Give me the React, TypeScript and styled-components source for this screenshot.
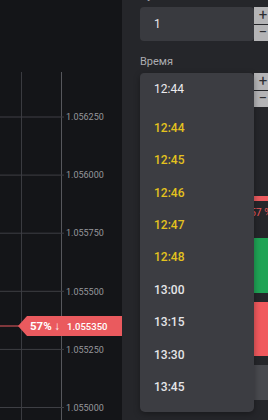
import React from 'react';
import styled, { createGlobalStyle } from 'styled-components';

const GlobalStyle = createGlobalStyle`
  html, body {
    margin: 0;
    padding: 0;
    background: #141518;
    overflow: hidden;
  }
  body {
    font-family: Roboto, "Noto Sans", "Liberation Sans", sans-serif;
  }
`;

const Page = styled.div`
  display: flex;
  width: 268px;
  height: 420px;
  overflow: hidden;
`;

const ChartPane = styled.div`
  position: relative;
  flex: none;
  width: 122px;
  height: 100%;
  background: #141518;
`;

const PriceTag = styled.div`
  position: absolute;
  left: 18px;
  top: 316px;
  width: 104px;
  height: 20px;
  display: flex;
  align-items: center;
  padding-left: 12px;
  box-sizing: border-box;
  background: #ea5a5e;
  color: #fff;
  clip-path: polygon(9px 0, 100% 0, 100% 100%, 9px 100%, 0 50%);
`;

const TagPercent = styled.span`
  font-size: 11.5px;
  font-weight: 700;
  width: 37px;
`;

const TagPrice = styled.span`
  font-size: 9.5px;
  font-weight: 500;
`;

const Sidebar = styled.aside`
  position: relative;
  flex: none;
  width: 160px;
  height: 100%;
  padding-left: 18px;
  box-sizing: border-box;
  background: #25262a;
  display: flex;
  flex-direction: column;
`;

const Field = styled.div<{ $top: number }>`
  display: flex;
  flex-direction: column;
  gap: 4px;
  margin-top: ${p => p.$top}px;
`;

const Label = styled.span`
  font-size: 11px;
  line-height: 14px;
  color: #acadb1;
`;

const InputRow = styled.div`
  display: flex;
  height: 34px;
`;

const InputBox = styled.div`
  width: 114px;
  flex: none;
  display: flex;
  align-items: center;
  padding-left: 14px;
  box-sizing: border-box;
  background: #393a3f;
  border-radius: 4px;
  color: #e9e9ea;
  font-size: 12px;
`;

const Stepper = styled.div`
  display: flex;
  flex-direction: column;
  gap: 1px;
  width: 18px;
`;

const StepButton = styled.div`
  flex: 1;
  display: flex;
  align-items: center;
  justify-content: center;
  background: #b4b4b6;
  color: #2c2d31;
  font-size: 15px;
  line-height: 1;
`;

const Sentiment = styled.div`
  display: flex;
  flex-direction: column;
  gap: 6px;
  width: 140px;
  margin-top: 89px;
`;

const SentimentBar = styled.div`
  display: flex;
  height: 5px;
`;

const BarPart = styled.div<{ $color: string }>`
  background: ${p => p.$color};
`;

const SentimentText = styled.div`
  display: flex;
  justify-content: space-between;
  padding-right: 8px;
  font-size: 10.5px;
  line-height: 12px;
`;

const Share = styled.span<{ $color: string }>`
  color: ${p => p.$color};
`;

const Actions = styled.div`
  display: flex;
  flex-direction: column;
  gap: 9px;
  width: 140px;
  margin-top: 19px;
`;

const ActionButton = styled.div<{ $color: string; $height: number }>`
  height: ${p => p.$height}px;
  background: ${p => p.$color};
`;

const Dropdown = styled.div`
  position: absolute;
  left: 18px;
  top: 73px;
  width: 114px;
  height: 339px;
  background: #3c3d42;
  border-radius: 5px;
  box-shadow: 0 2px 6px rgba(0, 0, 0, 0.35);
  display: flex;
  flex-direction: column;
`;

const DropdownHead = styled.div`
  height: 32px;
  display: flex;
  align-items: center;
  padding-left: 14px;
  color: #ececee;
  font-size: 12px;
`;

const OptionList = styled.ul`
  list-style: none;
  margin: 0;
  padding: 6.7px 0 0;
`;

const Option = styled.li<{ $soon?: boolean }>`
  height: 32.4px;
  display: flex;
  align-items: center;
  padding-left: 14px;
  font-size: 12px;
  font-weight: 500;
  color: ${p => (p.$soon ? '#e4c21e' : '#e6e6e8')};
`;

const gridLines = [
  { y: 117, label: '1.056250' },
  { y: 175.1, label: '1.056000' },
  { y: 233.2, label: '1.055750' },
  { y: 291.3, label: '1.055500' },
  { y: 349.4, label: '1.055250' },
  { y: 407.5, label: '1.055000' },
];

const options = [
  { time: '12:44', soon: true },
  { time: '12:45', soon: true },
  { time: '12:46', soon: true },
  { time: '12:47', soon: true },
  { time: '12:48', soon: true },
  { time: '13:00' },
  { time: '13:15' },
  { time: '13:30' },
  { time: '13:45' },
];

const Chart = () => (
  <ChartPane>
    <svg width="122" height="420" viewBox="0 0 122 420">
      <line x1="21.5" y1="72" x2="21.5" y2="420" stroke="#3a3b40" strokeWidth="1" />
      <line x1="61.5" y1="72" x2="61.5" y2="420" stroke="#56575c" strokeWidth="1" />
      {gridLines.map(g => (
        <g key={g.label}>
          <line x1="0" y1={g.y} x2="64" y2={g.y} stroke="#3e3f44" strokeWidth="1" />
          <text
            x="66"
            y={g.y + 3.2}
            fill="#96979b"
            fontSize="9"
            fontFamily="Roboto, 'Noto Sans', sans-serif"
          >
            {g.label}
          </text>
        </g>
      ))}
      <line x1="0" y1="326" x2="20" y2="326" stroke="#ea5a5e" strokeWidth="1" />
    </svg>
    <PriceTag>
      <TagPercent>57% ↓</TagPercent>
      <TagPrice>1.055350</TagPrice>
    </PriceTag>
  </ChartPane>
);

const Spinner = () => (
  <Stepper>
    <StepButton>+</StepButton>
    <StepButton>−</StepButton>
  </Stepper>
);

export default function App() {
  return (
    <>
      <GlobalStyle />
      <Page>
        <Chart />
        <Sidebar>
          <Field $top={-11}>
            <Label>Сумма</Label>
            <InputRow>
              <InputBox>1</InputBox>
              <Spinner />
            </InputRow>
          </Field>
          <Field $top={14}>
            <Label>Время</Label>
            <InputRow>
              <InputBox>12:44</InputBox>
              <Spinner />
            </InputRow>
          </Field>
          <Sentiment>
            <SentimentBar>
              <BarPart $color="#1fa355" style={{ width: '43%' }} />
              <BarPart $color="#ea5a5e" style={{ width: '57%' }} />
            </SentimentBar>
            <SentimentText>
              <Share $color="#1fa355">43 %</Share>
              <Share $color="#ea5a5e">57 %</Share>
            </SentimentText>
          </Sentiment>
          <Actions>
            <ActionButton $color="#1fa355" $height={55} />
            <ActionButton $color="#f0595d" $height={54} />
            <ActionButton $color="#48494e" $height={35} />
          </Actions>
          <Dropdown>
            <DropdownHead>12:44</DropdownHead>
            <OptionList>
              {options.map((o, i) => (
                <Option key={i} $soon={o.soon}>
                  {o.time}
                </Option>
              ))}
            </OptionList>
          </Dropdown>
        </Sidebar>
      </Page>
    </>
  );
}
